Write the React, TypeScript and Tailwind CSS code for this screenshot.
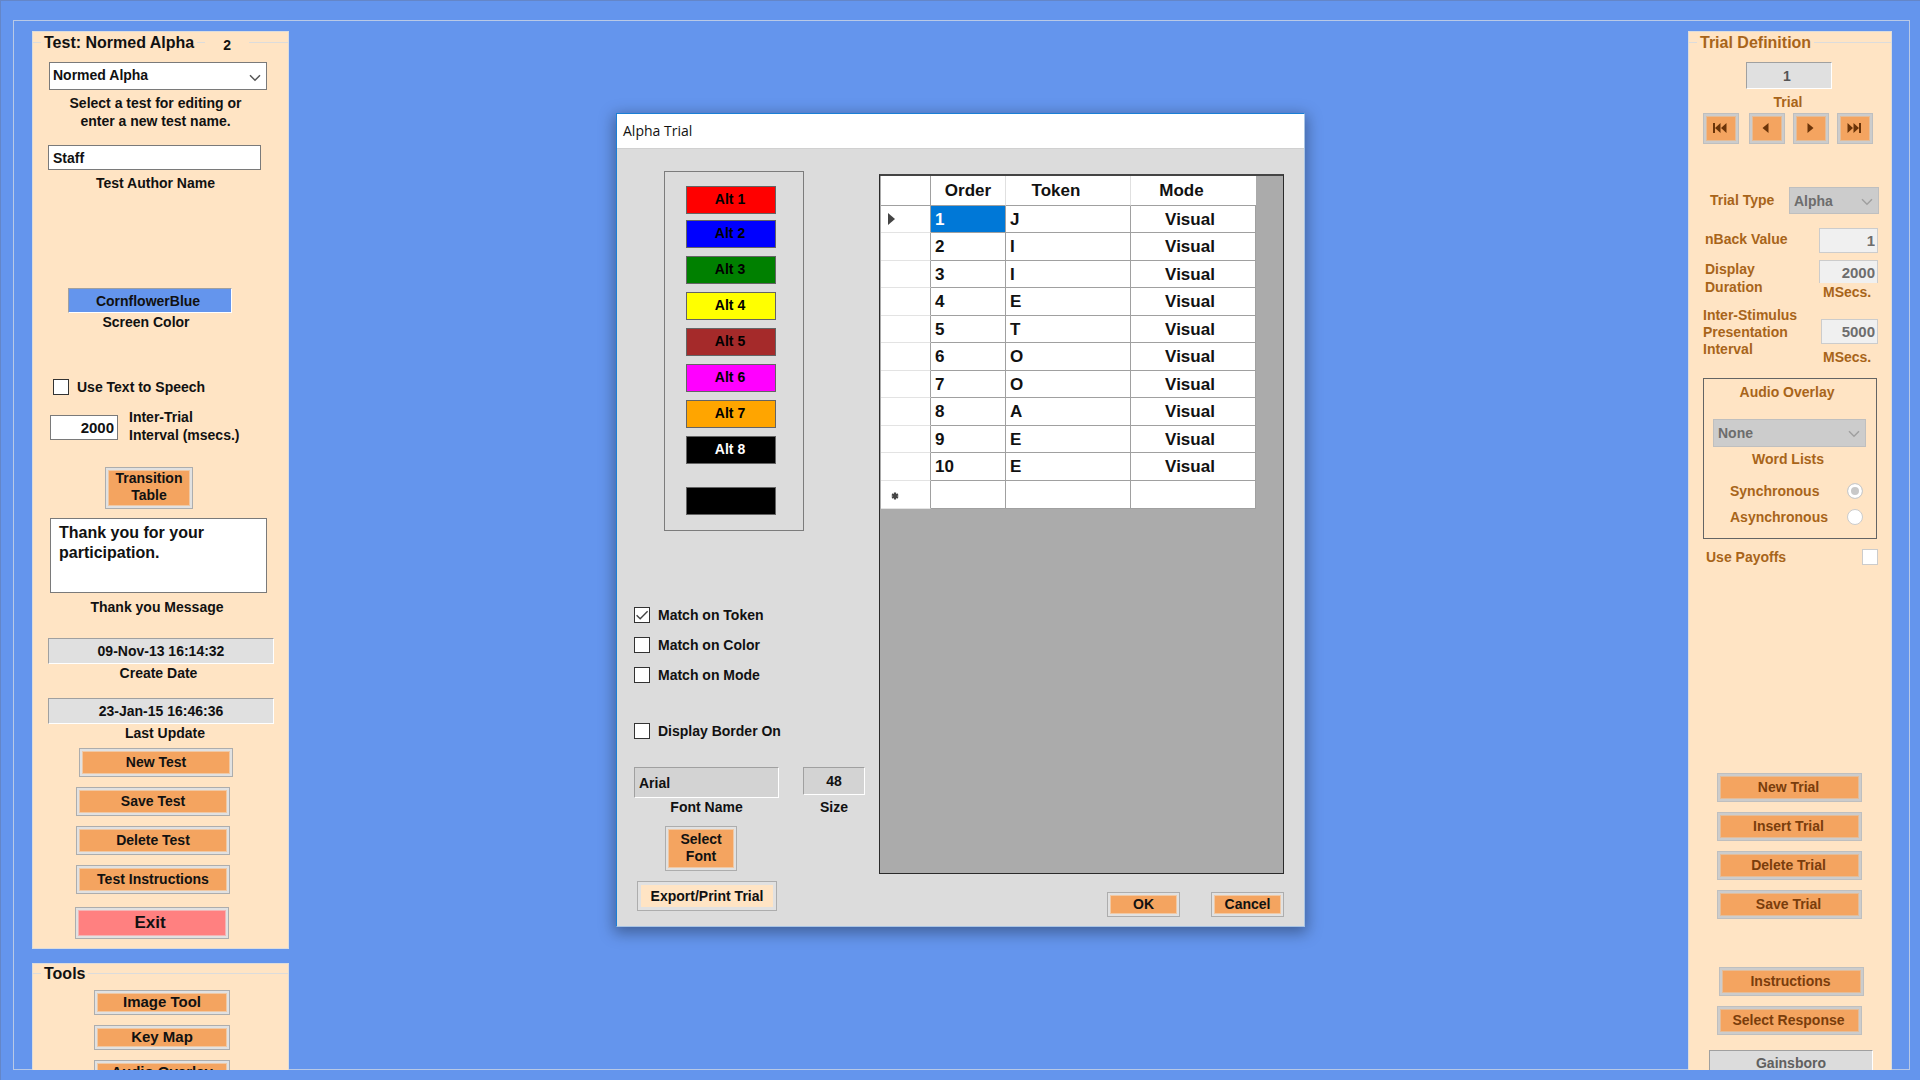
import type { ReactNode } from "react";

function Btn({ className = "", children, label }: { className?: string; children: ReactNode; label?: string }) {
  return (
    <button
      type="button"
      aria-label={label}
      className={`block shrink-0 border border-[#adadad] bg-[#f4a460] pb-0.5 text-center shadow-[inset_0_0_0_2px_#e1e1e1,inset_0_0_0_3px_#f0c8a4] ${className}`}
    >
      {children}
    </button>
  );
}

function TrialBtn({ className = "", children, label }: { className?: string; children: ReactNode; label?: string }) {
  return (
    <button
      type="button"
      disabled
      aria-label={label}
      className={`block shrink-0 border border-[#bfbfbf] bg-[#f4a460] pr-0.5 pb-0.5 text-center text-[#7a3d0c] shadow-[inset_0_0_0_2px_#cccccc,inset_0_0_0_3px_#e4bc98] ${className}`}
    >
      {children}
    </button>
  );
}

function Chevron({ className = "" }: { className?: string }) {
  return (
    <svg viewBox="0 0 12 8" className={`pointer-events-none absolute h-2 w-3 ${className}`} fill="none" stroke="currentColor" strokeWidth="1.5">
      <path d="M1 1.2 L6 6.2 L11 1.2" />
    </svg>
  );
}

function Check({ id, label, checked = false, className = "" }: { id: string; label: string; checked?: boolean; className?: string }) {
  return (
    <div className={`flex h-[18px] items-center gap-2 ${className}`}>
      <span className="relative block size-4">
        <input id={id} type="checkbox" defaultChecked={checked} className="block size-4 appearance-none border border-[#333333] bg-white" />
        {checked && (
          <svg viewBox="0 0 16 16" className="pointer-events-none absolute inset-0 size-4" fill="none" stroke="#444444" strokeWidth="1.4">
            <path d="M2.6 8.2 L6.2 11.8 L13.6 4.2" />
          </svg>
        )}
      </span>
      <label htmlFor={id}>{label}</label>
    </div>
  );
}

function Rule({ className = "" }: { className?: string }) {
  return <span className={`h-px bg-[#dcdcdc] ${className}`} />;
}

const sunken = "border border-t-[#a0a0a0] border-l-[#a0a0a0] border-b-white border-r-white";
const disabledField = "block border border-[#cccccc] bg-[#f0f0f0] px-0.5 text-right text-[15px] text-[#6d6d6d]";

function TestPanel() {
  return (
    <section className="flex shrink-0 flex-col items-start border border-[#dcdcdc] bg-[#ffe4c4] pb-[9px]">
      <header className="flex h-[21px] w-full items-center">
        <Rule className="w-2" />
        <h1 className="px-[3px] text-[16px] leading-5">Test: Normed Alpha</h1>
        <Rule className="w-2" />
        <span className="w-11 pt-1 pl-[18px]">2</span>
        <Rule className="flex-1" />
      </header>
      <div className="relative mt-[9px] ml-4 w-[218px]">
        <select aria-label="Test" className="block h-7 w-full appearance-none border border-[#7a7a7a] bg-white pb-0.5 pl-[3px]">
          <option>Normed Alpha</option>
        </select>
        <Chevron className="top-3 right-1.5 text-[#555555]" />
      </div>
      <p className="mt-1 w-[245px] text-center">
        Select a test for editing or
        <br />
        enter a new test name.
      </p>
      <input id="author" defaultValue="Staff" className="mt-[15px] ml-[15px] block h-[25px] w-[213px] border border-[#7a7a7a] bg-white px-1" />
      <label htmlFor="author" className="mt-1 block w-[245px] text-center">Test Author Name</label>
      <input id="screen" readOnly value="CornflowerBlue" className={`mt-24 ml-[35px] block h-[25px] w-[164px] bg-[#6495ed] px-1 pr-2 text-center ${sunken}`} />
      <label htmlFor="screen" className="block w-[226px] text-center">Screen Color</label>
      <Check id="tts" label="Use Text to Speech" className="mt-[47px] ml-5" />
      <div className="mt-3 ml-[17px] flex items-start">
        <input id="iti" defaultValue="2000" className="mt-[7px] block h-[25px] w-[68px] border border-[#7a7a7a] bg-white px-[3px] text-right text-[15px]" />
        <label htmlFor="iti" className="ml-[11px] block">
          Inter-Trial
          <br />
          Interval (msecs.)
        </label>
      </div>
      <Btn className="mt-[23px] ml-[72px] h-[42px] w-[88px] leading-[17px]">
        Transition
        <br />
        Table
      </Btn>
      <textarea
        id="thanks"
        defaultValue="Thank you for your participation."
        className="mt-[9px] ml-[17px] block h-[75px] w-[217px] resize-none overflow-hidden border border-[#7a7a7a] bg-white px-2 pt-1 text-[16px] leading-5"
      />
      <label htmlFor="thanks" className="mt-[5px] block w-[248px] text-center">Thank you Message</label>
      <input id="created" readOnly value="09-Nov-13 16:14:32" className={`mt-[22px] ml-[15px] block h-[26px] w-[226px] bg-[#e0e0e0] text-center ${sunken}`} />
      <label htmlFor="created" className="block w-[251px] text-center">Create Date</label>
      <input id="updated" readOnly value="23-Jan-15 16:46:36" className={`mt-4 ml-[15px] block h-[26px] w-[226px] bg-[#e0e0e0] text-center ${sunken}`} />
      <label htmlFor="updated" className="block w-[264px] text-center">Last Update</label>
      <div className="mt-1.5 ml-[43px] flex flex-col gap-2.5">
        <Btn className="ml-[3px] h-[29px] w-[154px]">New Test</Btn>
        <Btn className="h-[29px] w-[154px]">Save Test</Btn>
        <Btn className="h-[29px] w-[154px]">Delete Test</Btn>
        <Btn className="h-[29px] w-[154px]">Test Instructions</Btn>
      </div>
      <button type="button" className="mt-[13px] ml-[42px] block h-8 w-[154px] shrink-0 border border-[#adadad] bg-[#ff8080] pr-1 text-[17px] shadow-[inset_0_0_0_2px_#e1e1e1,inset_0_0_0_3px_#f4b4b4]">
        Exit
      </button>
    </section>
  );
}

function ToolsPanel() {
  return (
    <section className="mt-3.5 min-h-0 flex-1 overflow-hidden border border-b-0 border-[#dcdcdc] bg-[#ffe4c4]">
      <header className="flex h-[18px] items-center">
        <Rule className="w-2" />
        <h2 className="px-[3px] pt-0.5 text-[16px] leading-5">Tools</h2>
        <Rule className="flex-1" />
      </header>
      <div className="mt-2 ml-[61px] flex flex-col gap-2.5 text-[15px]">
        <Btn className="h-[25px] w-[136px]">Image Tool</Btn>
        <Btn className="h-[25px] w-[136px]">Key Map</Btn>
        <Btn className="h-[25px] w-[136px]">Audio Overlay</Btn>
      </div>
    </section>
  );
}

const navIcons = [
  { label: "First trial", d: "M1 1h2v10h-2z M8.5 1v10L3 6z M14.5 1v10L9 6z" },
  { label: "Previous trial", d: "M10.5 1v10L4.5 6z" },
  { label: "Next trial", d: "M5.5 1v10L11.5 6z" },
  { label: "Last trial", d: "M13 1h2v10h-2z M7.5 1v10L13 6z M1.5 1v10L7 6z" },
];

function TrialPanel() {
  return (
    <aside className="flex w-[204px] flex-col items-start overflow-hidden border border-b-0 border-[#dcdcdc] bg-[#ffe4c4] text-[#a8641a]">
      <header className="flex h-[21px] w-full shrink-0 items-center">
        <Rule className="w-2" />
        <h2 className="px-[3px] text-[16px] leading-5">Trial Definition</h2>
        <Rule className="flex-1" />
      </header>
      <input id="trial" readOnly value="1" className={`mt-[9px] ml-[57px] block h-[27px] w-[86px] shrink-0 bg-[#e0e0e0] pr-1 text-center text-[#555555] ${sunken}`} />
      <label htmlFor="trial" className="mt-1 block w-[198px] text-center">Trial</label>
      <div className="mt-0.5 ml-[14px] flex gap-2">
        {navIcons.map((n, i) => (
          <TrialBtn key={n.label} label={n.label} className={i === 0 ? "mr-0.5 h-[31px] w-9" : "h-[31px] w-9"}>
            <svg viewBox="0 0 16 12" className="mx-auto h-3 w-4" fill="#6b3409">
              <path d={n.d} />
            </svg>
          </TrialBtn>
        ))}
      </div>
      <div className="mt-[43px] ml-[21px] flex items-center">
        <label htmlFor="type" className="w-[79px] pb-0.5">Trial Type</label>
        <div className="relative w-[90px]">
          <select id="type" disabled className="block h-[27px] w-full appearance-none border border-[#bfbfbf] bg-[#cccccc] pl-1 text-[#6d6d6d] opacity-100">
            <option>Alpha</option>
          </select>
          <Chevron className="top-[11px] right-1.5 text-[#a0a0a0]" />
        </div>
      </div>
      <div className="mt-3.5 ml-4 flex items-center">
        <label htmlFor="nback" className="w-[114px] pb-1">nBack Value</label>
        <input id="nback" disabled value="1" className={`h-[25px] w-[59px] ${disabledField}`} />
      </div>
      <div className="mt-[7px] ml-4 flex items-start">
        <label htmlFor="duration" className="w-[114px]">
          Display
          <br />
          Duration
        </label>
        <div>
          <input id="duration" disabled value="2000" className={`h-[23px] w-[59px] border-b-0 ${disabledField}`} />
          <p className="pl-1">MSecs.</p>
        </div>
      </div>
      <div className="mt-1.5 ml-[14px] flex items-start">
        <label htmlFor="isi" className="w-[118px] leading-[17px]">
          Inter-Stimulus
          <br />
          Presentation
          <br />
          Interval
        </label>
        <div className="pt-3">
          <input id="isi" disabled value="5000" className={`h-[25px] w-[57px] ${disabledField}`} />
          <p className="mt-1 pl-0.5">MSecs.</p>
        </div>
      </div>
      <fieldset className="mt-3 ml-[14px] h-[161px] w-[174px] shrink-0 border border-[#646464]">
        <h3 className="mt-1 pr-1.5 text-center">Audio Overlay</h3>
        <div className="relative mt-[18px] ml-[9px] w-[153px]">
          <select id="words" disabled className="block h-7 w-full appearance-none border border-[#bfbfbf] bg-[#cccccc] pl-1 text-[#6d6d6d] opacity-100">
            <option>None</option>
          </select>
          <Chevron className="top-[11px] right-1.5 text-[#a0a0a0]" />
        </div>
        <label htmlFor="words" className="mt-[3px] block pr-1 text-center">Word Lists</label>
        <div className="mt-3.5 mr-[13px] ml-[26px] flex items-center justify-between">
          <label htmlFor="sync">Synchronous</label>
          <input
            id="sync"
            type="radio"
            name="mode"
            disabled
            defaultChecked
            className="size-4 appearance-none rounded-full border border-[#cccccc] bg-[#c8c8c8] shadow-[inset_0_0_0_3px_#ffffff]"
          />
        </div>
        <div className="mt-2 mr-[13px] ml-[26px] flex items-center justify-between">
          <label htmlFor="async">Asynchronous</label>
          <input id="async" type="radio" name="mode" disabled className="size-4 appearance-none rounded-full border border-[#cccccc] bg-white" />
        </div>
      </fieldset>
      <div className="mt-[9px] ml-[17px] flex w-[172px] items-center justify-between">
        <label htmlFor="payoffs">Use Payoffs</label>
        <input id="payoffs" type="checkbox" disabled className="size-4 appearance-none border border-[#cccccc] bg-white" />
      </div>
      <div className="mt-[207px] ml-7 flex flex-col gap-2.5">
        <TrialBtn className="h-[29px] w-[145px]">New Trial</TrialBtn>
        <TrialBtn className="h-[29px] w-[145px]">Insert Trial</TrialBtn>
        <TrialBtn className="h-[29px] w-[145px]">Delete Trial</TrialBtn>
        <TrialBtn className="h-[29px] w-[145px]">Save Trial</TrialBtn>
        <TrialBtn className="mt-[38px] ml-0.5 h-[29px] w-[145px]">Instructions</TrialBtn>
        <TrialBtn className="h-[29px] w-[145px]">Select Response</TrialBtn>
      </div>
      <input aria-label="Background color" readOnly value="Gainsboro" className={`mt-[15px] ml-5 block h-[26px] w-[164px] shrink-0 bg-[#dcdcdc] text-center text-[#606060] ${sunken}`} />
    </aside>
  );
}

const alts = [
  { name: "Alt 1", tone: "bg-[#ff0000] text-black" },
  { name: "Alt 2", tone: "mt-1.5 bg-[#0000ff] text-black" },
  { name: "Alt 3", tone: "mt-2 bg-[#008000] text-black" },
  { name: "Alt 4", tone: "mt-2 bg-[#ffff00] text-black" },
  { name: "Alt 5", tone: "mt-2 bg-[#a52a2a] text-black" },
  { name: "Alt 6", tone: "mt-2 bg-[#ff00ff] text-black" },
  { name: "Alt 7", tone: "mt-2 bg-[#ffa500] text-black" },
  { name: "Alt 8", tone: "mt-2 bg-black text-white" },
];

const tokens = ["J", "I", "I", "E", "T", "O", "O", "A", "E", "E"];

function TokenTable() {
  const cell = "border-r border-b border-[#a0a0a0] p-0 pt-px";
  const head = "border-b border-[#a0a0a0] p-0 pt-px";
  const rowHead = "border-r border-b border-r-[#a0a0a0] border-b-[#e3e3e3] p-0";
  return (
    <table className="w-[375px] table-fixed border-separate border-spacing-0 bg-white text-[17px]">
      <colgroup>
        <col className="w-[50px]" />
        <col className="w-[75px]" />
        <col className="w-[125px]" />
        <col className="w-[125px]" />
      </colgroup>
      <thead>
        <tr className="h-[30px]">
          <th className={`${head} border-r`} />
          <th className={`${head} border-r border-r-[#e0e0e0]`}>Order</th>
          <th className={`${head} border-r border-r-[#e0e0e0] pr-6`}>Token</th>
          <th className={`${head} pr-6`}>Mode</th>
        </tr>
      </thead>
      <tbody>
        {tokens.map((t, i) => (
          <tr key={i} className="h-[27px] even:h-7">
            <td className={rowHead}>
              {i === 0 && (
                <svg viewBox="0 0 7 12" aria-label="Current row" className="ml-[7px] h-3 w-[7px]" fill="#444444">
                  <path d="M0 0 L7 6 L0 12z" />
                </svg>
              )}
            </td>
            <td className={i === 0 ? `${cell} bg-[#0078d7] pl-1 text-white` : `${cell} pl-1`}>{i + 1}</td>
            <td className={`${cell} pl-1`}>{t}</td>
            <td className={`${cell} pr-1.5 text-center`}>Visual</td>
          </tr>
        ))}
        <tr className="h-7">
          <td className={rowHead}>
            <svg viewBox="0 0 8 8" aria-label="New row" className="mt-0.5 ml-2.5 size-2" stroke="#444444" strokeWidth="2.2">
              <path d="M4 0.5V7.5M1 2.2L7 5.8M7 2.2L1 5.8" />
            </svg>
          </td>
          <td className={cell} />
          <td className={cell} />
          <td className={cell} />
        </tr>
      </tbody>
    </table>
  );
}

function AlphaDialog() {
  return (
    <div className="pointer-events-none absolute inset-0 flex items-start justify-center pt-28">
      <div role="dialog" aria-label="Alpha Trial" className="pointer-events-auto w-[689px] border border-[#a9c4e4] border-t-[#1a7fd6] border-l-[#1a7fd6] bg-[#dcdcdc] shadow-[0_4px_14px_2px_rgba(0,0,0,0.35)]">
        <h2 className="flex h-[35px] items-center border-b border-[#d0d0d0] bg-white pl-1.5 font-['Open_Sans',sans-serif] text-[14px] font-normal">Alpha Trial</h2>
        <div className="flex items-start">
          <div className="w-[262px] shrink-0 pl-[17px]">
            <div className="mt-[22px] ml-[30px] w-[140px] border border-[#7c7c7c] pt-3.5 pb-[15px] pl-[21px]">
              {alts.map((a) => (
                <button key={a.name} type="button" className={`block h-7 w-[90px] border border-[#646464] pr-0.5 pb-0.5 ${a.tone}`}>
                  {a.name}
                </button>
              ))}
              <button type="button" aria-label="Border color" className="mt-[23px] block h-7 w-[90px] border border-[#646464] bg-black" />
            </div>
            <div className="mt-[75px] flex flex-col gap-3">
              <Check id="mt" label="Match on Token" checked />
              <Check id="mc" label="Match on Color" />
              <Check id="mm" label="Match on Mode" />
            </div>
            <Check id="db" label="Display Border On" className="mt-[38px]" />
            <div className="mt-[27px] flex h-[49px] items-start justify-between pr-3.5">
              <div className="flex w-[145px] flex-col">
                <input id="font" readOnly value="Arial" className={`h-[31px] bg-[#d3d3d3] px-1 ${sunken}`} />
                <label htmlFor="font" className="text-center">Font Name</label>
              </div>
              <div className="flex w-[62px] flex-col">
                <input id="size" readOnly value="48" className={`h-7 bg-[#d3d3d3] text-center ${sunken}`} />
                <label htmlFor="size" className="mt-[3px] text-center">Size</label>
              </div>
            </div>
            <Btn className="mt-2.5 ml-[31px] h-[45px] w-[72px] leading-[17px]">
              Select
              <br />
              Font
            </Btn>
            <button type="button" className="mt-2.5 ml-[3px] block h-[30px] w-[140px] border border-[#adadad] bg-[#ffe4c4] shadow-[inset_0_0_0_3px_#e1e1e1]">
              Export/Print Trial
            </button>
          </div>
          <div className="mt-[25px] mr-5 flex-1">
            <div className="h-[700px] border border-t-2 border-[#2a2a2a] border-t-[#444444] bg-[#ababab] pl-px">
              <TokenTable />
            </div>
            <div className="mt-[18px] mb-[9px] flex justify-end gap-[31px]">
              <Btn className="h-[25px] w-[73px]">OK</Btn>
              <Btn className="h-[25px] w-[73px]">Cancel</Btn>
            </div>
          </div>
        </div>
      </div>
    </div>
  );
}

export default function App() {
  return (
    <div className="relative flex h-screen overflow-hidden border-t border-l border-[#6486c8] bg-[#6495ed] pt-[19px] pr-2.5 pb-2.5 pl-3 font-['Liberation_Sans',Arial,sans-serif] text-[14px] leading-[18px] font-bold text-[#111111]">
      <main className="flex flex-1 items-stretch justify-between border border-[#b9c9e6] pt-2.5 pr-[17px] pl-[18px]">
        <div className="-mb-px flex min-h-0 w-[257px] flex-col">
          <TestPanel />
          <ToolsPanel />
        </div>
        <div className="-mb-px flex min-h-0">
          <TrialPanel />
        </div>
      </main>
      <AlphaDialog />
    </div>
  );
}
